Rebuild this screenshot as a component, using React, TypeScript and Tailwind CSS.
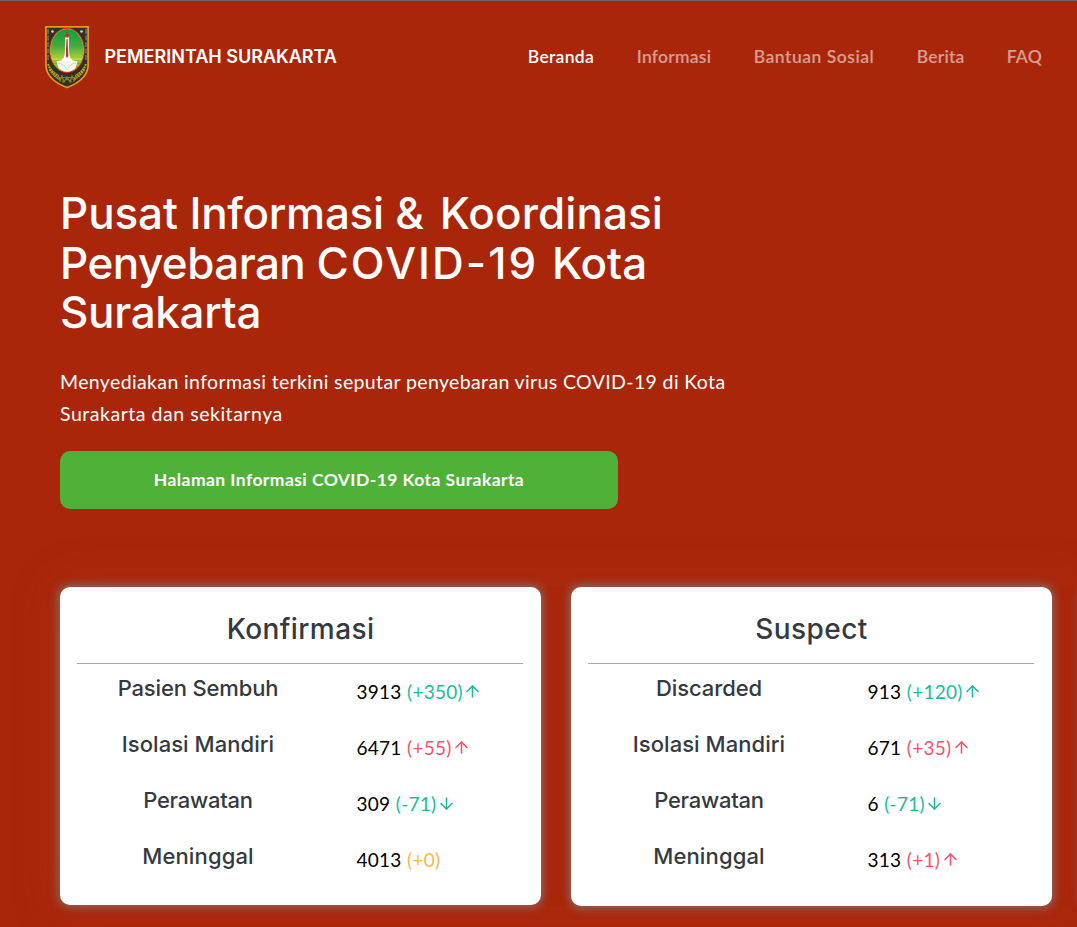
import { FiArrowDown, FiArrowUp } from 'react-icons/fi';

type Tone = 'good' | 'bad' | 'flat';

interface Stat {
  label: string;
  tracking: string;
  value: string;
  delta: string;
  tone: Tone;
  arrow?: 'up' | 'down';
}

const toneClass: Record<Tone, string> = {
  good: 'text-[#1abc9c]',
  bad: 'text-[#f1556c]',
  flat: 'text-[#f7b84b]',
};

const konfirmasi: Stat[] = [
  { label: 'Pasien Sembuh', tracking: 'tracking-[-0.15px]', value: '3913', delta: '(+350)', tone: 'good', arrow: 'up' },
  { label: 'Isolasi Mandiri', tracking: 'tracking-[0.05px]', value: '6471', delta: '(+55)', tone: 'bad', arrow: 'up' },
  { label: 'Perawatan', tracking: 'tracking-[-0.25px]', value: '309', delta: '(-71)', tone: 'good', arrow: 'down' },
  { label: 'Meninggal', tracking: 'tracking-[0.15px]', value: '4013', delta: '(+0)', tone: 'flat' },
];

const suspect: Stat[] = [
  { label: 'Discarded', tracking: 'tracking-[-0.1px]', value: '913', delta: '(+120)', tone: 'good', arrow: 'up' },
  { label: 'Isolasi Mandiri', tracking: 'tracking-[0.05px]', value: '671', delta: '(+35)', tone: 'bad', arrow: 'up' },
  { label: 'Perawatan', tracking: 'tracking-[-0.25px]', value: '6', delta: '(-71)', tone: 'good', arrow: 'down' },
  { label: 'Meninggal', tracking: 'tracking-[0.15px]', value: '313', delta: '(+1)', tone: 'bad', arrow: 'up' },
];

function Emblem() {
  return (
    <svg className="h-[64px] w-[44px] shrink-0" viewBox="0 0 44 64">
      <defs>
        <linearGradient id="sky" x1="0" y1="0" x2="0" y2="1">
          <stop offset="0" stopColor="#129a3c" />
          <stop offset="0.4" stopColor="#45ab3e" />
          <stop offset="0.7" stopColor="#b5d03a" />
          <stop offset="0.75" stopColor="#6bb52f" />
          <stop offset="1" stopColor="#7cb82f" />
        </linearGradient>
        <clipPath id="oval">
          <ellipse cx="22" cy="25.3" rx="16.6" ry="21.4" />
        </clipPath>
      </defs>
      <path d="M.9 1.9H43.1V40C43.1 49 36 57.5 22 62.5 8 57.5.9 49 .9 40Z" fill="#33302a" stroke="#e59a19" strokeWidth="1.7" />
      <path d="M3 4V36M41 4V36" stroke="#97958b" strokeWidth="1" strokeDasharray="5 1.5" />
      <ellipse cx="22" cy="25.3" rx="17.3" ry="22.1" fill="#e8d832" stroke="#d92416" strokeWidth="1" />
      <g clipPath="url(#oval)">
        <rect x="5" y="3" width="34" height="45" fill="url(#sky)" />
        <path d="M5 34H39M5 37H39M5 40H39" stroke="#d9dc35" strokeWidth="0.8" opacity="0.8" />
        <path d="M11.5 36.5 22 34 32.5 36.5 30.5 43 26 47H18L13.5 43Z" fill="#f8f7ef" />
        <path d="M13 38Q19 38.5 22 45 25 38.5 31 38" fill="none" stroke="#c7c3b5" strokeWidth="0.7" />
        <path d="M20.2 12H23.8L24.2 28 25 32.5 28 36H16L19 32.5 19.8 28Z" fill="#fff" />
      </g>
      <path d="M22 6.5Q24 9 23.6 12.5H20.4Q20 9 22 6.5Z" fill="#dc241b" />
      <path d="M21.4 14H22.6L23 24 23.4 31 22 33 20.8 31 21 24Z" fill="#d6292b" />
      <circle cx="7.5" cy="6.5" r="1.3" fill="#d8d8d8" />
      <circle cx="36.5" cy="6.5" r="1.3" fill="#d8d8d8" />
      <g fill="none" stroke="#bfa51d" strokeWidth="2" strokeDasharray="1.9 .7">
        <path d="M3 39Q6 47 14 51" />
        <path d="M41 39Q38 47 30 51" />
        <path d="M4.5 44.5Q9 51 15 54.5" />
        <path d="M39.5 44.5Q35 51 29 54.5" />
      </g>
      <path d="M12 51 15 56 17 51 19 57 22 52 25 57 27 51 29 56 32 51M17 57 22 54 27 57M14 52.5H30" fill="none" stroke="#8f7e1d" strokeWidth="1.2" />
    </svg>
  );
}

const cardClass =
  'w-[481px] shrink-0 rounded-[10px] bg-white shadow-[0_0_10px_2px_rgba(128,128,128,0.75)]';

function StatCard({ title, stats, height }: { title: string; stats: Stat[]; height: string }) {
  return (
    <section className={`${cardClass} pr-[18px] pl-[17px] ${height}`}>
      <h2 className="flex h-[77px] items-center justify-center border-b border-[#aaa] pt-[9px] pl-px font-['Inter',sans-serif] text-[28px] leading-none font-medium tracking-[0.4px] text-[#343a40]">
        {title}
      </h2>
      <ul className="text-black">
        {stats.map((s) => (
          <li key={s.label} className="flex h-[56px]">
            <span className={`w-[242px] pt-[9px] text-center font-['Inter',sans-serif] text-[22px] leading-[30px] font-medium text-[#343a40] ${s.tracking}`}>
              {s.label}
            </span>
            <span className="ml-[37.5px] flex items-center text-[19px] leading-[28px] tracking-[0.25px]">
              {s.value}
              <span className={`ml-[5.5px] flex items-center ${toneClass[s.tone]}`}>
                {s.delta}
                {s.arrow === 'up' && <FiArrowUp className="ml-[0.5px] size-[19px]" />}
                {s.arrow === 'down' && <FiArrowDown className="ml-[0.5px] size-[19px]" />}
              </span>
            </span>
          </li>
        ))}
      </ul>
    </section>
  );
}

export default function App() {
  return (
    <div className="h-[927px] w-full overflow-hidden border-t border-[#6b6b6b] bg-[#a9260a] font-['Lato',sans-serif] text-white">
      <header className="flex h-[112px] items-center justify-between pr-[35px] pl-[45px]">
        <a className="flex items-center">
          <Emblem />
          <span className="ml-[15.5px] pb-[2px] font-['Inter',sans-serif] text-[18px] font-semibold tracking-[0px]">PEMERINTAH SURAKARTA</span>
        </a>
        <nav className="flex text-[17.5px] leading-6 font-semibold whitespace-nowrap text-white/55">
          <a className="w-[109px] tracking-[0.3px] text-white">Beranda</a>
          <a className="w-[117px] tracking-[0.25px]">Informasi</a>
          <a className="w-[163px] tracking-[0.5px]">Bantuan Sosial</a>
          <a className="w-[90px] tracking-[0.2px]">Berita</a>
          <a className="tracking-[0.2px]">FAQ</a>
        </nav>
      </header>
      <main className="pl-[60px]">
        <h1 className="pt-[76px] font-['Inter',sans-serif] text-[44px] leading-[49.5px] font-medium whitespace-nowrap">
          <span className="block">
            <span className="tracking-[-0.1px]">Pusat </span>
            <span className="tracking-[-0.3px]">Informasi </span>
            <span className="tracking-[2px]">&amp; </span>
            <span className="tracking-[0.1px]">Koordinasi</span>
          </span>
          <span className="block">
            <span className="tracking-[-0.55px]">Penyebaran </span>
            <span className="tracking-[2px]">COVID-19 </span>
            <span className="tracking-[0px]">Kota</span>
          </span>
          <span className="block tracking-[-0.35px]">Surakarta</span>
        </h1>
        <p className="mt-[28px] text-[19.5px] leading-[32px] tracking-[0.37px]">
          Menyediakan informasi terkini seputar penyebaran virus COVID-19 di Kota
          <br />
          <span className="tracking-[0.53px]">Surakarta dan sekitarnya</span>
        </p>
        <button className="mt-[21px] flex h-[58px] w-[558px] items-center justify-center rounded-[10px] bg-[#50b138] pt-[2px] text-[17.5px] font-bold tracking-[0.43px]">
          Halaman Informasi COVID-19 Kota Surakarta
        </button>
        <div className="mt-[78px] flex items-start gap-[30px] shadow-[0_0_40px_4px_rgba(175,60,32,0.3)]">
          <StatCard title="Konfirmasi" stats={konfirmasi} height="h-[318px]" />
          <StatCard title="Suspect" stats={suspect} height="h-[319px]" />
          <section className={`${cardClass} h-[319px]`} />
        </div>
      </main>
    </div>
  );
}
